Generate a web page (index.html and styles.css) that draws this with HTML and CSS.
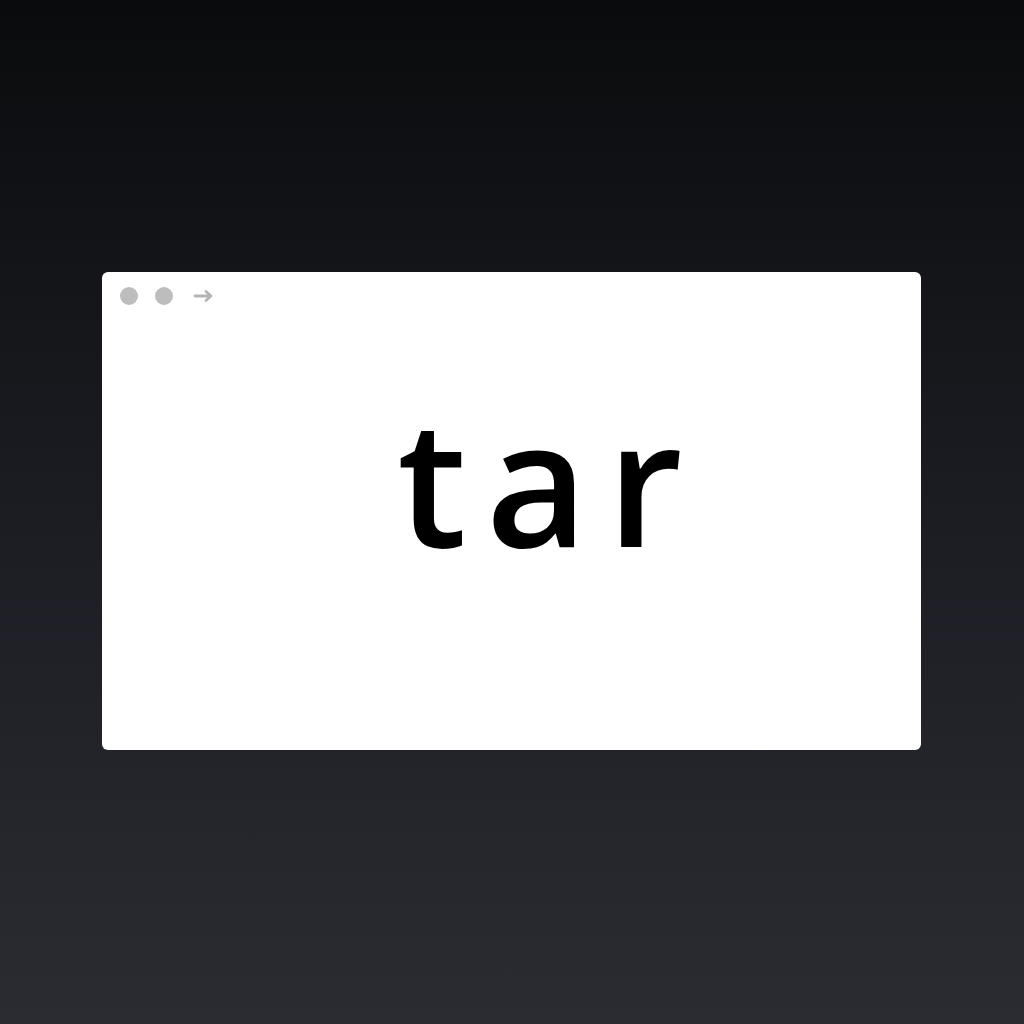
FILE: index.html
```html
<!DOCTYPE html>
<html>
<head>
<meta charset="utf-8">
<link rel="stylesheet" href="styles.css">
</head>
<body>
<div class="stage">
  <div class="window">
    <div class="bar">
      <span class="dot"></span>
      <span class="dot"></span>
      <svg class="arrow" width="22" height="14" viewBox="0 0 22 14"><path d="M2 7H18M13 2.5L18 7L13 11.5" fill="none" stroke="#b5b5b5" stroke-width="2.8" stroke-linecap="round" stroke-linejoin="round"/></svg>
    </div>
    <div class="content">
      <div class="word">tar</div>
    </div>
  </div>
</div>
</body>
</html>
```
FILE: styles.css
```css
html, body {
  margin: 0;
  padding: 0;
}
body {
  width: 1024px;
  height: 1024px;
  background: linear-gradient(180deg, #0a0b0d 0%, #15161a 30%, #1f2027 60%, #2b2c31 100%);
  font-family: "Open Sans", "Noto Sans", sans-serif;
}
.stage {
  padding: 272px 103px 0 102px;
}
.window {
  height: 478px;
  background: #ffffff;
  border-radius: 6px;
  display: flex;
  flex-direction: column;
}
.bar {
  display: flex;
  align-items: center;
  gap: 17px;
  padding: 15px 0 0 18px;
  height: 18px;
}
.dot {
  width: 18px;
  height: 18px;
  border-radius: 50%;
  background: #bdbdbd;
}
.arrow {
  margin-left: 3px;
}
.content {
  flex: 1;
  display: flex;
  align-items: center;
  justify-content: center;
  padding-bottom: 98px;
  padding-left: 76px;
}
.word {
  font-size: 176px;
  font-weight: 600;
  letter-spacing: 19px;
  color: #000;
  line-height: 1;
}
```
